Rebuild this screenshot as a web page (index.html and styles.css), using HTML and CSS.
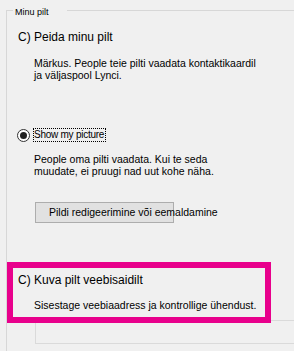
FILE: index.html
```html
<!DOCTYPE html>
<html lang="et">
<head>
<meta charset="utf-8">
<title>Minu pilt</title>
<link rel="stylesheet" href="styles.css">
</head>
<body>
<div class="group">
  <div class="legend">Minu pilt</div>

  <div class="title t1">C) Peida minu pilt</div>
  <p class="note n1">Märkus. People teie pilti vaadata kontaktikaardil<br>ja väljaspool Lynci.</p>

  <div class="radio-row">
    <span class="radio"><span class="dot"></span></span>
    <span class="radio-label">Show my picture</span>
  </div>
  <p class="note n2">People oma pilti vaadata. Kui te seda<br>muudate, ei pruugi nad uut kohe näha.</p>

  <div class="btn"><span class="btn-text">Pildi redigeerimine või eemaldamine</span></div>

  <div class="web">
    <div class="title">C) Kuva pilt veebisaidilt</div>
    <p class="note n3">Sisestage veebiaadress ja kontrollige ühendust.</p>
    <div class="textbox"></div>
    <div class="highlight"></div>
  </div>
</div>
</body>
</html>
```

FILE: styles.css
```css
html, body {
  margin: 0;
  padding: 0;
  background: #f0f0f0;
  overflow: hidden;
}

body {
  font-family: "Liberation Sans", Arial, sans-serif;
  color: #000;
}

.group {
  position: relative;
  margin: 10px 0 0 6px;
  border-top: 1px solid #d7d7d7;
  border-left: 1px solid #d7d7d7;
  min-height: 341px;
  box-sizing: border-box;
  display: flex;
  flex-direction: column;
  align-items: flex-start;
}

.legend {
  position: absolute;
  top: -4px;
  left: 6px;
  width: 54px;
  box-sizing: border-box;
  padding-left: 2px;
  background: #f0f0f0;
  font-size: 9px;
  line-height: 10px;
}

.title {
  font-size: 12px;
  line-height: 14px;
  padding-left: 11px;
  white-space: nowrap;
}

.t1 {
  margin-top: 19px;
}

.note {
  margin: 0;
  padding-left: 27px;
  font-size: 10.5px;
  line-height: 12px;
  white-space: nowrap;
}

.n1 {
  margin-top: 13px;
}

.radio-row {
  margin-top: 47px;
  margin-left: 10px;
  display: flex;
  align-items: center;
  gap: 3px;
  height: 14px;
}

.radio {
  width: 13px;
  height: 13px;
  box-sizing: border-box;
  border: 1px solid #333;
  border-radius: 50%;
  background: #fff;
  display: flex;
  align-items: center;
  justify-content: center;
}

.dot {
  width: 7px;
  height: 7px;
  border-radius: 50%;
  background: #222;
}

.radio-label {
  font-size: 10px;
  letter-spacing: -0.25px;
  line-height: 12px;
  border: 1px dotted #000;
  padding: 0 1px 0 0;
  white-space: nowrap;
}

.n2 {
  margin-top: 11px;
}

.btn {
  margin-top: 25px;
  margin-left: 28px;
  width: 139px;
  height: 21px;
  box-sizing: border-box;
  border: 1px solid #adadad;
  background: #e1e1e1;
  padding-left: 13px;
  font-size: 10.5px;
  line-height: 19px;
  white-space: nowrap;
  overflow: visible;
}

.web {
  position: relative;
  margin-top: 50px;
  align-self: stretch;
  display: flex;
  flex-direction: column;
}

.n3 {
  margin-top: 12px;
}

.textbox {
  margin-top: 9px;
  margin-left: 28px;
  height: 24px;
  box-sizing: border-box;
  border: 1px solid #dadada;
  border-right: none;
}

.highlight {
  position: absolute;
  top: -11px;
  left: 0;
  width: 264px;
  height: 61px;
  box-sizing: border-box;
  border: 6px solid #e8008c;
  z-index: 1;
  pointer-events: none;
}
```
